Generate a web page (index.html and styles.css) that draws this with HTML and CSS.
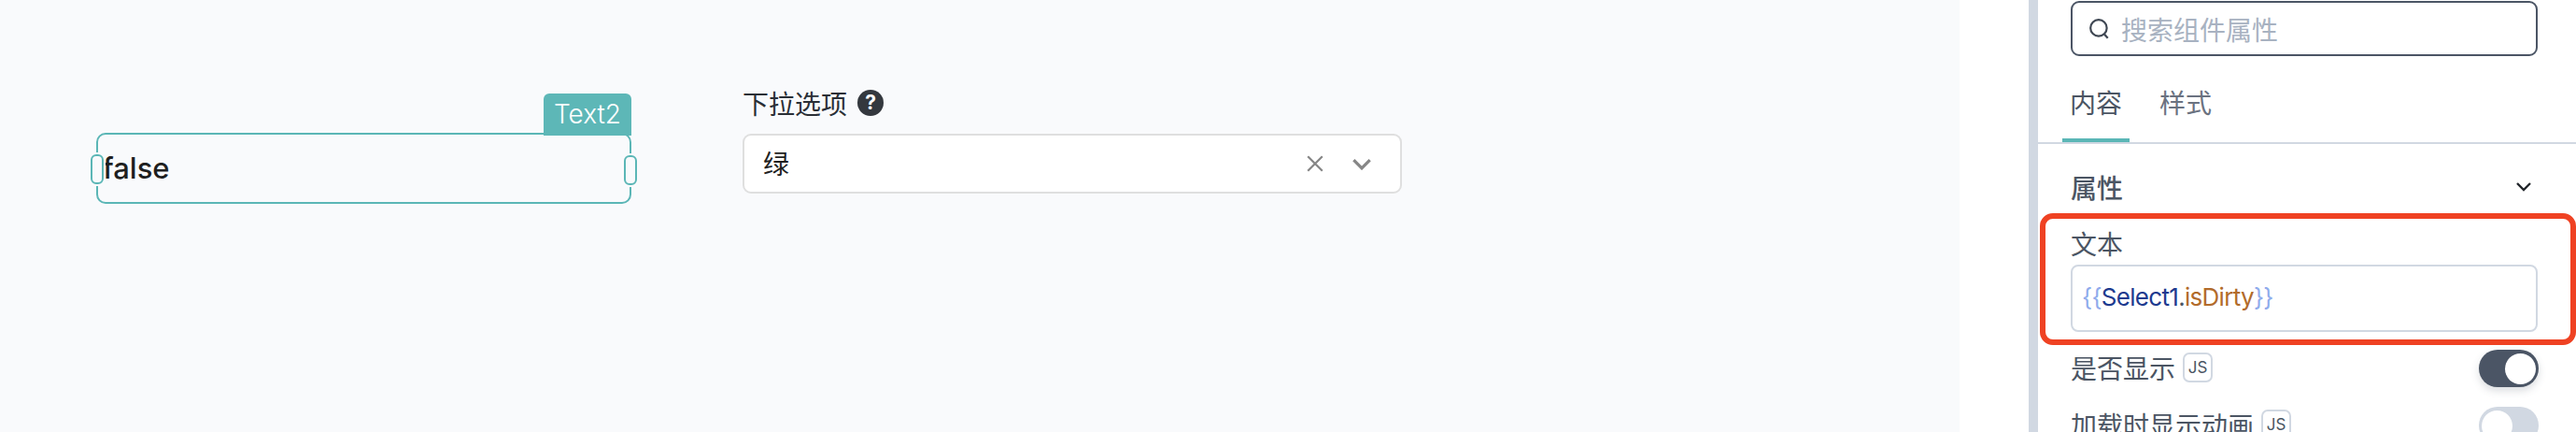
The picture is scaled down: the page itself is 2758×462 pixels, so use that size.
FILE: index.html
```html
<!DOCTYPE html>
<html lang="zh-CN">
<head>
<meta charset="utf-8">
<title>Text2</title>
<link rel="stylesheet" href="styles.css">
</head>
<body>
<div class="app">
  <main class="canvas">
    <div class="text-widget">
      <span class="widget-tag">Text2</span>
      <span class="handle handle-left"></span>
      <span class="widget-value">false</span>
      <span class="handle handle-right"></span>
    </div>
    <div class="select-widget">
      <div class="select-label"><span>下拉选项</span><span class="help">?</span></div>
      <div class="select-box">
        <span class="select-value">绿</span>
        <svg class="select-clear" viewBox="0 0 18 18"><path d="M2 2 16 16M16 2 2 16"/></svg>
        <svg class="select-arrow" viewBox="0 0 20 12"><path d="M2 2 10 10 18 2"/></svg>
      </div>
    </div>
  </main>
  <div class="gutter"></div>
  <div class="scrollbar"></div>
  <aside class="panel">
    <div class="search">
      <svg class="search-icon" viewBox="0 0 22 22"><circle cx="10" cy="10" r="8"/><path d="M15.5 16 19 20"/></svg>
      <span class="search-placeholder">搜索组件属性</span>
    </div>
    <div class="tabs">
      <span class="tab tab-active">内容</span>
      <span class="tab">样式</span>
    </div>
    <div class="section-head">
      <span>属性</span>
      <svg class="section-arrow" viewBox="0 0 18 12"><path d="M2 2 9 9 16 2"/></svg>
    </div>
    <div class="highlight">
      <div class="field-label">文本</div>
      <div class="code-input"><span class="c-brace">{{</span><span class="c-ref">Select1</span><span class="c-dot">.</span><span class="c-prop">isDirty</span><span class="c-brace">}}</span></div>
    </div>
    <div class="row row-first">
      <span class="row-label">是否显示</span><span class="js">JS</span>
      <span class="toggle toggle-on"><span class="knob"></span></span>
    </div>
    <div class="row row-second">
      <span class="row-label">加载时显示动画</span><span class="js">JS</span>
      <span class="toggle toggle-off"><span class="knob"></span></span>
    </div>
  </aside>
</div>
</body>
</html>
```
FILE: styles.css
```css
* { box-sizing: border-box; }
html, body { margin: 0; padding: 0; background: #fff; }
body { font-family: Inter, "Noto Sans CJK SC", sans-serif; }

.app { display: flex; width: 2758px; height: 462px; overflow: hidden; }

/* free canvas: widgets sit at their own coordinates */
.canvas { position: relative; width: 2098px; flex: none; background: #f9fafc; }
.gutter { width: 74px; flex: none; background: #fff; }
.scrollbar { width: 10px; flex: none; background: #d1d8e2; }
.panel { flex: 1; min-width: 0; background: #fff; padding-top: 1px; }

.text-widget {
  position: absolute; left: 103px; top: 142px; width: 573px; height: 76px;
  border: 2px solid #5bb6b6; border-radius: 10px;
  display: flex; align-items: center; padding-left: 5px;
}
.widget-tag {
  position: absolute; right: -2px; top: -44px; width: 94px; height: 45px;
  background: #5db7b7; color: #fff; border-radius: 6px 6px 0 0;
  font-size: 28px; font-weight: 300; line-height: 44px; text-align: center;
}
.widget-value { font-size: 31px; font-weight: 500; color: #1f1f1f; line-height: 40px; }
.handle {
  position: absolute; top: 21px; width: 14px; height: 32px;
  background: #f9fafc; border: 2px solid #5bb6b6; border-radius: 6px;
  box-shadow: 0 0 0 2px #f9fafc;
}
.handle-left { left: -8px; }
.handle-right { right: -8px; top: 22px; }

.select-widget { position: absolute; left: 795px; top: 93px; width: 706px; }
.select-label {
  display: flex; align-items: center; gap: 11px; height: 34px;
  font-size: 28px; color: #2a2f36; font-family: "Noto Sans CJK SC", sans-serif;
}
.help {
  width: 28px; height: 28px; border-radius: 50%; background: #34383e; color: #fff;
  font: 700 21px/28px Inter, sans-serif; text-align: center;
}
.select-box {
  display: flex; align-items: center; height: 64px; margin-top: 16px; padding: 0 30px 0 20px;
  background: #fff; border: 2px solid #dfdfdf; border-radius: 9px;
}
.select-value {
  flex: 1; padding-bottom: 2px; font-family: "Noto Sans CJK SC", sans-serif; font-size: 28px; color: #1f1f1f;
}
.select-clear { width: 20px; height: 20px; fill: none; stroke: #868686; stroke-width: 2; margin-right: 29px; }
.select-arrow { width: 22px; height: 13px; fill: none; stroke: #868686; stroke-width: 3; }

.search {
  display: flex; align-items: center; height: 59px; margin: 0 41px 0 35px; padding-left: 17px;
  border: 2px solid #4b5565; border-radius: 9px;
}
.search-icon { width: 24px; height: 24px; fill: none; stroke: #3f4753; stroke-width: 2; }
.search-placeholder {
  margin-left: 11px; font-family: "Noto Sans CJK SC", sans-serif; font-size: 28px; line-height: 36px;
  color: #a8b2c1;
}

.tabs {
  display: flex; gap: 24px; height: 94px; padding-left: 26px;
  border-bottom: 2px solid #d1d8e2;
  font-family: "Noto Sans CJK SC", sans-serif; font-size: 28px; color: #6b7280;
}
.tab { width: 72px; height: 92px; padding-top: 31px; text-align: center; line-height: 36px; }
.tab-active { color: #4b5563; border-bottom: 4px solid #5bb6b6; }

.section-head {
  display: flex; align-items: center; justify-content: space-between;
  height: 74px; margin-left: 35px; padding: 18px 47px 0 0;
  font-family: "Noto Sans CJK SC", sans-serif; font-size: 28px; color: #4b5563; font-weight: 500;
}
.section-arrow { width: 18px; height: 12px; fill: none; stroke: #22262b; stroke-width: 2.4; }

.highlight {
  height: 141px; margin-left: 2px; padding: 8px 0 0 27px;
  border: 6px solid #ef4223; border-radius: 14px;
  font-family: "Noto Sans CJK SC", sans-serif;
}
.field-label { height: 36px; margin-bottom: 5px; line-height: 36px; font-size: 28px; color: #4b5563; }
.code-input {
  width: 500px; height: 72px; padding-left: 10px;
  background: #fff; border: 2px solid #d1d8e2; border-radius: 8px;
  font: 400 26px/66px Inter, sans-serif;
  letter-spacing: -0.7px;
}
.c-brace { color: #8fabec; }
.c-ref { color: #1d3a8f; }
.c-dot { color: #4b5563; }
.c-prop { color: #b26b2b; }

.row {
  display: flex; align-items: center; margin-left: 35px; padding-right: 40px;
  font-family: "Noto Sans CJK SC", sans-serif; font-size: 28px; color: #4b5563;
}
.row-label { padding-bottom: 3px; }
.row-first { height: 40px; margin-top: 5px; }
.row-second { height: 40px; margin-top: 21px; }
.js {
  width: 32px; height: 32px; margin-left: 8px; margin-bottom: 3px;
  border: 2px solid #d1d8e2; border-radius: 7px;
  font: 400 17px/28px Inter, sans-serif; color: #4b5563; text-align: center;
}
.toggle { margin-left: auto; width: 64px; height: 40px; border-radius: 20px; padding: 4px; flex: none; display: flex; }
.toggle-on { background: #4b5565; justify-content: flex-end; box-shadow: 0 4px 8px rgba(75,85,101,0.2); padding-right: 3px; }
.toggle-off { background: #d1d8e2; padding-left: 3px; }
.knob { width: 33px; height: 33px; border-radius: 50%; background: #fff; }
```
